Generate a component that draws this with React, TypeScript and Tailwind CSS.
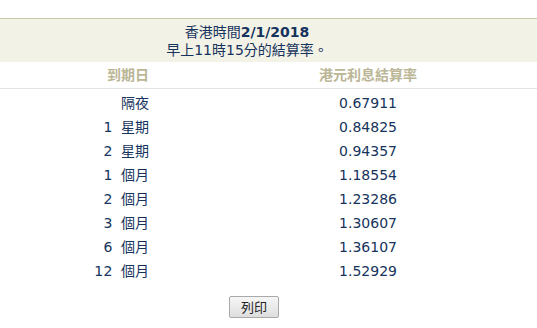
import React from "react";

const rows: [string, string, string][] = [
  ["", "隔夜", "0.67911"],
  ["1", "星期", "0.84825"],
  ["2", "星期", "0.94357"],
  ["1", "個月", "1.18554"],
  ["2", "個月", "1.23286"],
  ["3", "個月", "1.30607"],
  ["6", "個月", "1.36107"],
  ["12", "個月", "1.52929"],
];

export default function App() {
  return (
    <div
      className="w-[537px] h-[328px] bg-white text-[14px] text-[#15335c] overflow-hidden"
      style={{ fontFamily: '"DejaVu Sans", "Noto Sans CJK TC", sans-serif' }}
    >
      <div className="h-[18px]" />
      <div className="border-t border-[#cbc8a2] bg-[#f3f2e7] h-[44px] pt-[4px]">
        <div className="w-[494px] text-center leading-[18px]">
          香港時間<span className="font-bold">2/1/2018</span>
        </div>
        <div className="w-[494px] text-center leading-[18px]">早上11時15分的結算率。</div>
      </div>
      <div className="flex h-[27px] items-center border-b border-[#e3e3e3] font-bold text-[#bab696]">
        <div className="w-[149px] text-right">到期日</div>
        <div className="ml-[50px] flex-1 text-center">港元利息結算率</div>
      </div>
      <div className="pt-[2px]">
        {rows.map(([n, u, b]) => (
          <div key={n + u} className="flex h-[24px] items-center">
            <div className="w-[149px] flex justify-end items-center">
              {n && <span className="tracking-[0.5px]">{n}</span>}
              <span className="ml-[8px]">{u}</span>
            </div>
            <div className="ml-[50px] flex-1 text-center">{b}</div>
          </div>
        ))}
      </div>
      <div className="w-[508px] flex justify-center pt-[13px]">
        <button className="w-[50px] h-[22px] border border-[#a9a9a9] rounded-[2px] bg-gradient-to-b from-[#f6f6f6] to-[#dedede] text-[13px] text-[#222] leading-none">
          列印
        </button>
      </div>
    </div>
  );
}
